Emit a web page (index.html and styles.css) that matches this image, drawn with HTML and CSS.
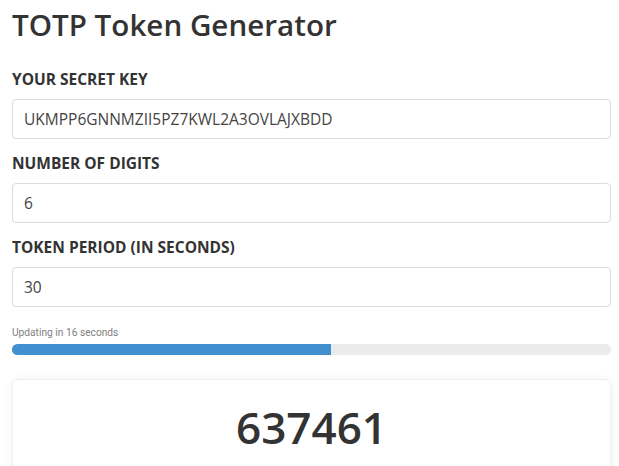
FILE: index.html
```html
<!DOCTYPE html>
<html lang="en">
<head>
<meta charset="utf-8">
<title>TOTP Token Generator</title>
<link rel="stylesheet" href="styles.css">
</head>
<body>
<main class="page">
  <h1 class="title">TOTP Token Generator</h1>
  <form class="form">
    <label class="label" for="secret">YOUR SECRET KEY</label>
    <input class="field" id="secret" type="text" value="UKMPP6GNNMZII5PZ7KWL2A3OVLAJXBDD">
    <label class="label" for="digits">NUMBER OF DIGITS</label>
    <input class="field" id="digits" type="text" value="6">
    <label class="label" for="period">TOKEN PERIOD (IN SECONDS)</label>
    <input class="field" id="period" type="text" value="30">
  </form>
  <div class="status">Updating in 16 seconds</div>
  <div class="progress"><div class="progress-fill" style="width: 53.33%"></div></div>
  <section class="card">
    <div class="token">637461</div>
  </section>
</main>
</body>
</html>
```

FILE: styles.css
```css
* { box-sizing: border-box; }
html, body { margin: 0; padding: 0; background: #fff; }
body {
  font-family: "Open Sans", "Noto Sans", "Liberation Sans", sans-serif;
  color: #333;
  overflow: hidden;
}
.page {
  display: flex;
  flex-direction: column;
  padding: 8px 8px 0 12px;
}
.title {
  margin: 0;
  font-size: 29.6px;
  font-weight: 600;
  line-height: 34px;
  color: #333;
}
.form {
  display: flex;
  flex-direction: column;
  margin-top: 27px;
}
.label {
  font-size: 15.5px;
  font-weight: 700;
  line-height: 20px;
  color: #333;
  margin-bottom: 10px;
}
.field {
  height: 40px;
  border: 1px solid #dcdcdc;
  border-radius: 4px;
  padding: 0 11px;
  font-family: inherit;
  font-size: 15.5px;
  color: #444;
  margin: 0 0 14px 0;
  outline: none;
}
.field:last-child { margin-bottom: 0; }
.status {
  margin-top: 18px;
  font-family: Roboto, "Open Sans", sans-serif;
  font-size: 10.2px;
  line-height: 15px;
  color: #808080;
}
.progress {
  margin-top: 4px;
  height: 11px;
  border-radius: 6px;
  background: #ebebeb;
  overflow: hidden;
}
.progress-fill {
  height: 100%;
  background: #428fcf;
}
.card {
  margin-top: 24px;
  border: 1px solid #f0f0f0;
  border-radius: 5px;
  box-shadow: 0 1px 8px rgba(0,0,0,0.07);
  padding: 21px 0 40px;
  display: flex;
  justify-content: center;
}
.token {
  font-size: 44px;
  font-weight: 600;
  line-height: 52px;
  color: #333;
}
```
